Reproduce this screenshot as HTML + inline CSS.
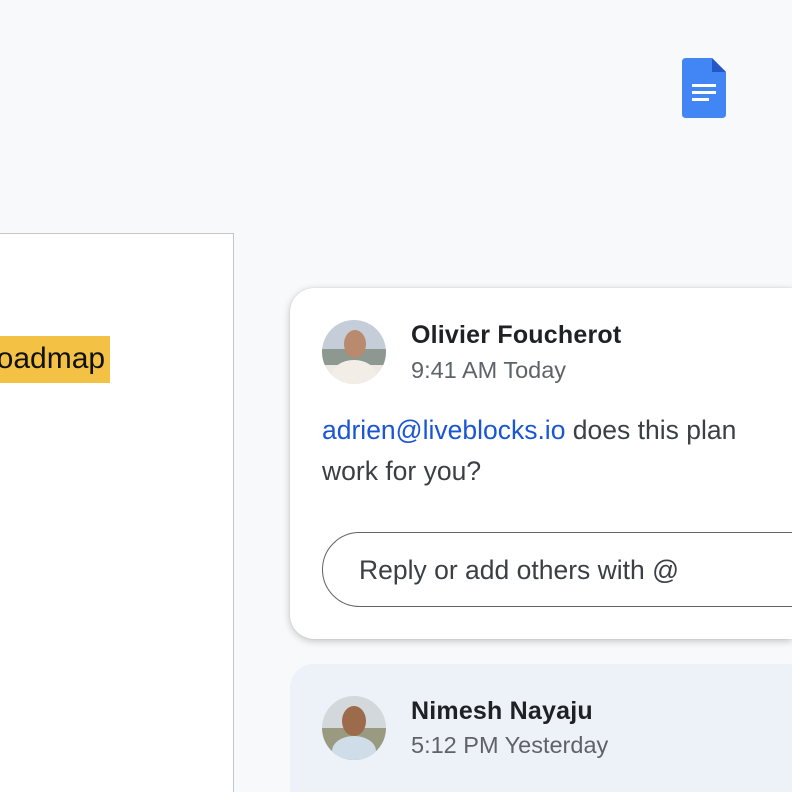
<!DOCTYPE html>
<html><head><style>
*{margin:0;padding:0;box-sizing:border-box}
html,body{width:792px;height:792px;overflow:hidden}
body{background:#f8f9fb;font-family:"Liberation Sans",sans-serif;position:relative}
.doc{position:absolute;left:-2px;top:233px;width:236px;height:559px;background:#fff;border:1.5px solid #c6c6c6;border-bottom:none}
.hl{position:absolute;left:0;top:336px;width:110px;height:47px;background:#f3c144;overflow:hidden}
.hl span{position:absolute;left:-25px;top:6px;font-size:30px;color:#111;white-space:nowrap}
.card{position:absolute;left:290px;top:288px;width:502px;height:351px;background:#fff;border-radius:24px 0 0 24px;box-shadow:0 2px 8px rgba(0,0,0,.22),0 0 1px rgba(0,0,0,.2)}
.card2{position:absolute;left:290px;top:664px;width:502px;height:128px;background:#edf1f8;border-radius:24px 0 0 0}
.av{position:absolute;width:64px;height:64px;border-radius:50%;overflow:hidden}
.name{position:absolute;font-size:25px;font-weight:bold;color:#202124;letter-spacing:0.2px}
.time{position:absolute;font-size:23.5px;color:#5f6368;letter-spacing:0}
.body{position:absolute;left:322px;top:410px;font-size:26.5px;line-height:41px;color:#3c4043}
.body a{color:#1a55d4;text-decoration:none}
.reply{position:absolute;left:322px;top:532px;width:540px;height:75px;border:1.5px solid #5f6368;border-radius:38px;font-size:26.5px;color:#3c4043;padding:22px 0 0 36px}
</style></head><body>
<svg style="position:absolute;left:682px;top:58px" width="44" height="60" viewBox="0 0 44 60">
<path d="M4 0H30L44 14V56Q44 60 40 60H4Q0 60 0 56V4Q0 0 4 0Z" fill="#4285f4"/>
<path d="M30 0V14H44Z" fill="#2456c8"/>
<rect x="10" y="26" width="24" height="3" fill="#fff"/>
<rect x="10" y="33" width="24" height="3" fill="#fff"/>
<rect x="10" y="40" width="17" height="3" fill="#fff"/>
</svg>
<div class="doc"></div>
<div class="hl"><span>Roadmap</span></div>
<div class="card"></div>
<div class="av" style="left:322px;top:320px;background:linear-gradient(#c5ced8 0 45%,#8d9890 45% 70%,#eee8e2 70%)">
<div style="position:absolute;left:22px;top:10px;width:22px;height:28px;border-radius:50%;background:#b98a6e"></div>
<div style="position:absolute;left:10px;top:40px;width:44px;height:30px;border-radius:50% 50% 0 0;background:#f3ede8"></div></div>
<div class="name" style="left:411px;top:321px">Olivier Foucherot</div>
<div class="time" style="left:411px;top:357px">9:41 AM Today</div>
<div class="body"><a>adrien@liveblocks.io</a> does this plan<br>work for you?</div>
<div class="reply">Reply or add others with @</div>
<div class="card2"></div>
<div class="av" style="left:322px;top:696px;background:linear-gradient(#d2d8dc 0 50%,#9a9a80 50%)">
<div style="position:absolute;left:20px;top:10px;width:24px;height:30px;border-radius:50%;background:#9c6b4c"></div>
<div style="position:absolute;left:10px;top:40px;width:44px;height:30px;border-radius:50% 50% 0 0;background:#cfdde8"></div></div>
<div class="name" style="left:411px;top:697px">Nimesh Nayaju</div>
<div class="time" style="left:411px;top:732px">5:12 PM Yesterday</div>
</body></html>
